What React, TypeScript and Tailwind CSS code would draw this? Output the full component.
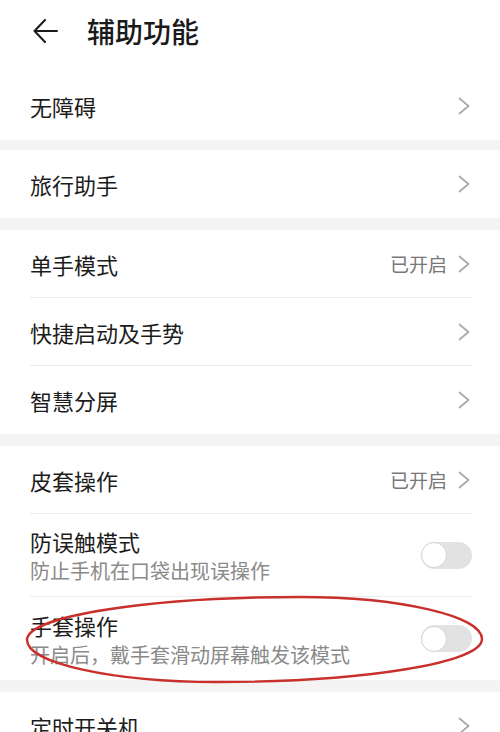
import React from "react";

const Chevron = () => (
  <svg width="14" height="18" viewBox="0 0 14 18" className="shrink-0">
    <path d="M1.5 1.5 L10.5 9 L1.5 16.5" fill="none" stroke="#a9a9a9" strokeWidth="1.7" strokeLinecap="round" strokeLinejoin="round" />
  </svg>
);

const Toggle = () => (
  <div className="w-[51px] h-[27px] rounded-full bg-[#e2e2e2] flex items-center shrink-0">
    <div className="w-[26px] h-[26px] rounded-full bg-white border border-[#d6d6d6]" />
  </div>
);

type RowProps = { title: string; value?: string; divider?: boolean };

const NavRow = ({ title, value, divider }: RowProps) => (
  <div className="bg-white pl-[30px] pr-[28px]">
    <div className={`h-[68px] flex items-center justify-between ${divider ? "border-b border-[#ebebeb]" : ""}`}>
      <span className="text-[22px] leading-[28px] text-[#1c1c1c]">{title}</span>
      <div className="flex items-center gap-[11px]">
        {value && <span className="text-[19px] leading-[24px] text-[#777777]">{value}</span>}
        <Chevron />
      </div>
    </div>
  </div>
);

const SwitchRow = ({ title, sub, divider }: { title: string; sub: string; divider?: boolean }) => (
  <div className="bg-white pl-[30px] pr-[28px]">
    <div className={`h-[83px] flex items-center justify-between ${divider ? "border-b border-[#ebebeb]" : ""}`}>
      <div className="flex flex-col">
        <span className="text-[22px] leading-[28px] text-[#1c1c1c]">{title}</span>
        <span className="text-[20px] leading-[24px] mt-[4px] text-[#8a8a8a]">{sub}</span>
      </div>
      <Toggle />
    </div>
  </div>
);

export default function App() {
  return (
    <div className="relative w-[500px] h-[732px] overflow-hidden bg-[#f4f4f4] font-['Noto_Sans_CJK_SC','Noto_Sans',sans-serif]">
      <div className="h-[72px] bg-white flex items-start pl-[33px] pt-[13px]">
        <div className="h-[36px] flex items-center">
          <svg width="25" height="24" viewBox="0 0 25 24">
            <path d="M24 12 H1.5 M12 1 L1.5 12 L12 23" fill="none" stroke="#1a1a1a" strokeWidth="2" strokeLinecap="round" strokeLinejoin="round" />
          </svg>
          <span className="ml-[29px] text-[28px] leading-[36px] font-medium text-[#1a1a1a]">辅助功能</span>
        </div>
      </div>

      <NavRow title="无障碍" />
      <div className="h-[10px]" />
      <NavRow title="旅行助手" />
      <div className="h-[12px]" />
      <NavRow title="单手模式" value="已开启" divider />
      <NavRow title="快捷启动及手势" divider />
      <NavRow title="智慧分屏" />
      <div className="h-[12px]" />
      <NavRow title="皮套操作" value="已开启" divider />
      <SwitchRow title="防误触模式" sub="防止手机在口袋出现误操作" divider />
      <SwitchRow title="手套操作" sub="开启后，戴手套滑动屏幕触发该模式" />
      <div className="h-[12px]" />
      <NavRow title="定时开关机" />

      <svg className="absolute left-0 top-0 pointer-events-none" width="500" height="732" viewBox="0 0 500 732">
        <path
          d="M27 640 C27 616 150 597 300 597 C400 597 482 616 482 639 C482 663 363 682 217 682 C112 682 27 663 27 640 Z"
          fill="none"
          stroke="#c9302c"
          strokeWidth="2.4"
        />
      </svg>
    </div>
  );
}
